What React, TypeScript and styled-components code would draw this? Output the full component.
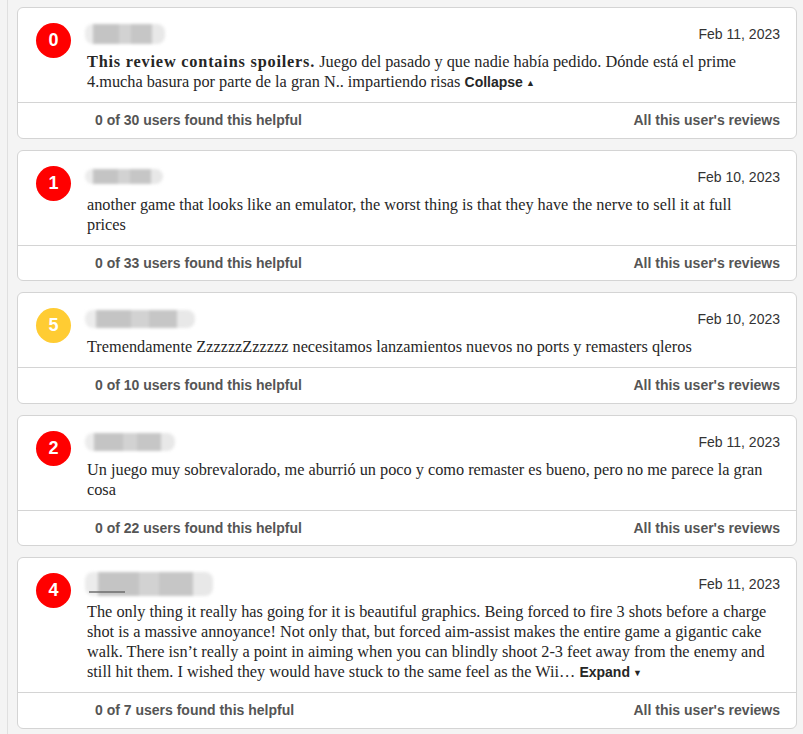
import React from 'react';
import styled, { createGlobalStyle } from 'styled-components';

const GlobalStyle = createGlobalStyle`
	html, body {
		margin: 0;
		padding: 0;
		background: #f4f4f4;
	}
	body {
		font-family: "Liberation Sans", Arial, sans-serif;
	}
`;

const Page = styled.div`
	margin-left: 7px;
	border-left: 1px solid #e0e0e0;
	padding: 7px 6px 0 9px;
	min-height: 734px;
	box-sizing: border-box;
	display: flex;
	flex-direction: column;
	gap: 11px;
`;

const Card = styled.article`
	width: 780px;
	box-sizing: border-box;
	background: #fff;
	border: 1px solid #d4d4d4;
	border-radius: 6px;
`;

const Main = styled.div`
	display: flex;
	align-items: flex-start;
	padding: 16px 16px 10px 18px;
`;

const Score = styled.div<{ $color: string }>`
	flex: none;
	width: 35px;
	height: 35px;
	margin-top: -1px;
	margin-right: 16px;
	border-radius: 50%;
	background: ${(p) => p.$color};
	color: #fff;
	font: bold 18px "Liberation Sans", Arial, sans-serif;
	display: flex;
	align-items: center;
	justify-content: center;
`;

const Content = styled.div`
	flex: 1;
	min-width: 0;
`;

const Header = styled.div`
	display: flex;
	justify-content: space-between;
	align-items: center;
	height: 20px;
	margin-bottom: 8px;
`;

const NameSlot = styled.div`
	position: relative;
	height: 20px;
	display: flex;
	align-items: center;
`;

const Name = styled.div<{ $w: number; $h: number }>`
	width: ${(p) => p.$w}px;
	height: ${(p) => p.$h}px;
	margin-left: -2px;
	border-radius: 8px;
	background: linear-gradient(
		90deg,
		#ececec 0 10%,
		#c4c4c4 10% 42%,
		#d2d2d2 42% 58%,
		#c6c6c6 58% 84%,
		#e8e8e8 84% 100%
	);
	filter: blur(1.5px);
`;

/* a sliver of the hidden name peeking out under the blur */
const NameTrace = styled.span`
	position: absolute;
	left: 2px;
	bottom: 1px;
	width: 36px;
	height: 2px;
	background: #666;
	opacity: 0.7;
`;

const DateText = styled.span`
	font-size: 14px;
	color: #333;
`;

const Body = styled.div`
	font-family: "Liberation Serif", "Times New Roman", serif;
	font-size: 16.3px;
	line-height: 20px;
	color: #262626;
`;

const Line = styled.span`
	display: block;
	height: 20px;
	white-space: nowrap;
`;

const Spoiler = styled.b`
	font-weight: bold;
	letter-spacing: 0.8px;
`;

const Toggle = styled.span`
	font-family: "Liberation Sans", Arial, sans-serif;
	font-size: 14px;
	font-weight: bold;
	color: #262626;
	cursor: pointer;
`;

const Arrow = styled.span`
	font-size: 9px;
	margin-left: 3px;
	vertical-align: 1px;
`;

const Footer = styled.div`
	display: flex;
	justify-content: space-between;
	align-items: center;
	height: 34.5px;
	border-top: 1px solid #d4d4d4;
	padding: 0 16px 0 77px;
	font-size: 14px;
	font-weight: bold;
	color: #555;
`;

const FooterLink = styled.a`
	color: #555;
	text-decoration: none;
	cursor: pointer;
`;

type Review = {
	score: number;
	date: string;
	nameW: number;
	nameH: number;
	trace?: boolean;
	lines: React.ReactNode[];
	helpful: string;
};

const RED = '#ff0000';
const YELLOW = '#ffcc33';

const reviews: Review[] = [
	{
		score: 0,
		date: 'Feb 11, 2023',
		nameW: 80,
		nameH: 20,
		lines: [
			<>
				<Spoiler>This review contains spoilers.</Spoiler> Juego del pasado y que nadie había pedido. Dónde está el prime
			</>,
			<>
				4.mucha basura por parte de la gran N.. impartiendo risas{' '}
				<Toggle>
					Collapse<Arrow>▲</Arrow>
				</Toggle>
			</>,
		],
		helpful: '0 of 30 users found this helpful',
	},
	{
		score: 1,
		date: 'Feb 10, 2023',
		nameW: 78,
		nameH: 15,
		lines: [
			'another game that looks like an emulator, the worst thing is that they have the nerve to sell it at full',
			'prices',
		],
		helpful: '0 of 33 users found this helpful',
	},
	{
		score: 5,
		date: 'Feb 10, 2023',
		nameW: 110,
		nameH: 18,
		lines: ['Tremendamente ZzzzzzZzzzzz necesitamos lanzamientos nuevos no ports y remasters qleros'],
		helpful: '0 of 10 users found this helpful',
	},
	{
		score: 2,
		date: 'Feb 11, 2023',
		nameW: 90,
		nameH: 18,
		lines: [
			'Un juego muy sobrevalorado, me aburrió un poco y como remaster es bueno, pero no me parece la gran',
			'cosa',
		],
		helpful: '0 of 22 users found this helpful',
	},
	{
		score: 4,
		date: 'Feb 11, 2023',
		nameW: 128,
		nameH: 24,
		trace: true,
		lines: [
			'The only thing it really has going for it is beautiful graphics. Being forced to fire 3 shots before a charge',
			'shot is a massive annoyance! Not only that, but forced aim-assist makes the entire game a gigantic cake',
			'walk. There isn’t really a point in aiming when you can blindly shoot 2-3 feet away from the enemy and',
			<>
				still hit them. I wished they would have stuck to the same feel as the Wii…{' '}
				<Toggle>
					Expand<Arrow>▼</Arrow>
				</Toggle>
			</>,
		],
		helpful: '0 of 7 users found this helpful',
	},
];

const ReviewCard = ({ review }: { review: Review }) => {
	return (
		<Card>
			<Main>
				<Score $color={review.score >= 5 ? YELLOW : RED}>{review.score}</Score>
				<Content>
					<Header>
						<NameSlot>
							<Name $w={review.nameW} $h={review.nameH} />
							{review.trace && <NameTrace />}
						</NameSlot>
						<DateText>{review.date}</DateText>
					</Header>
					<Body>
						{review.lines.map((line, i) => (
							<Line key={i}>{line}</Line>
						))}
					</Body>
				</Content>
			</Main>
			<Footer>
				<span>{review.helpful}</span>
				<FooterLink>All this user's reviews</FooterLink>
			</Footer>
		</Card>
	);
};

const App = () => {
	return (
		<>
			<GlobalStyle />
			<Page>
				{reviews.map((r, i) => (
					<ReviewCard key={i} review={r} />
				))}
			</Page>
		</>
	);
};

export default App;
